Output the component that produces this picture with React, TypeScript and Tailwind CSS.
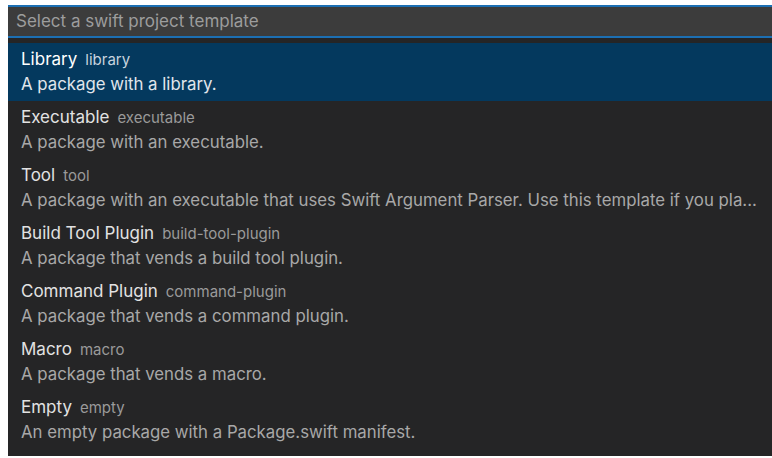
const templates = [
  { name: 'Library', id: 'library', description: 'A package with a library.' },
  { name: 'Executable', id: 'executable', description: 'A package with an executable.' },
  {
    name: 'Tool',
    id: 'tool',
    description: 'A package with an executable that uses Swift Argument Parser. Use this template if you pla...',
  },
  { name: 'Build Tool Plugin', id: 'build-tool-plugin', description: 'A package that vends a build tool plugin.' },
  { name: 'Command Plugin', id: 'command-plugin', description: 'A package that vends a command plugin.' },
  { name: 'Macro', id: 'macro', description: 'A package that vends a macro.' },
  { name: 'Empty', id: 'empty', description: 'An empty package with a Package.swift manifest.' },
]

export default function App() {
  const selected = 0
  return (
    <div className="w-[772px] h-[458px] bg-white pt-[5px] pl-2 overflow-hidden" style={{ fontFamily: 'Inter, "Noto Sans", sans-serif' }}>
      <div className="h-[451px] bg-[#252526] flex flex-col">
        <div className="h-[33px] bg-[#3c3c3c] border-y-2 border-[#1c6fb3] flex items-center pl-2 text-[17px] text-[#9d9d9d]">
          Select a swift project template
        </div>
        <div className="mt-[5px] flex flex-col">
          {templates.map((t, i) => (
            <div
              key={t.id}
              className={
                'h-[58px] pl-[13px] pr-2 pb-[2px] flex flex-col justify-center ' +
                (i === selected ? 'bg-[#04395e]' : '')
              }
            >
              <div className="flex items-baseline gap-2 leading-[24px]">
                <span className={'text-[17px] ' + (i === selected ? 'text-white' : 'text-[#e2e2e2]')}>{t.name}</span>
                <span className={'text-[15px] ' + (i === selected ? 'text-[#c8d4df]' : 'text-[#9a9a9a]')}>{t.id}</span>
              </div>
              <div
                className={
                  'text-[16.8px] leading-[24px] whitespace-nowrap ' + (i === selected ? 'text-[#e0e6ec]' : 'text-[#a8a8a8]')
                }
              >
                {t.description}
              </div>
            </div>
          ))}
        </div>
      </div>
    </div>
  )
}
